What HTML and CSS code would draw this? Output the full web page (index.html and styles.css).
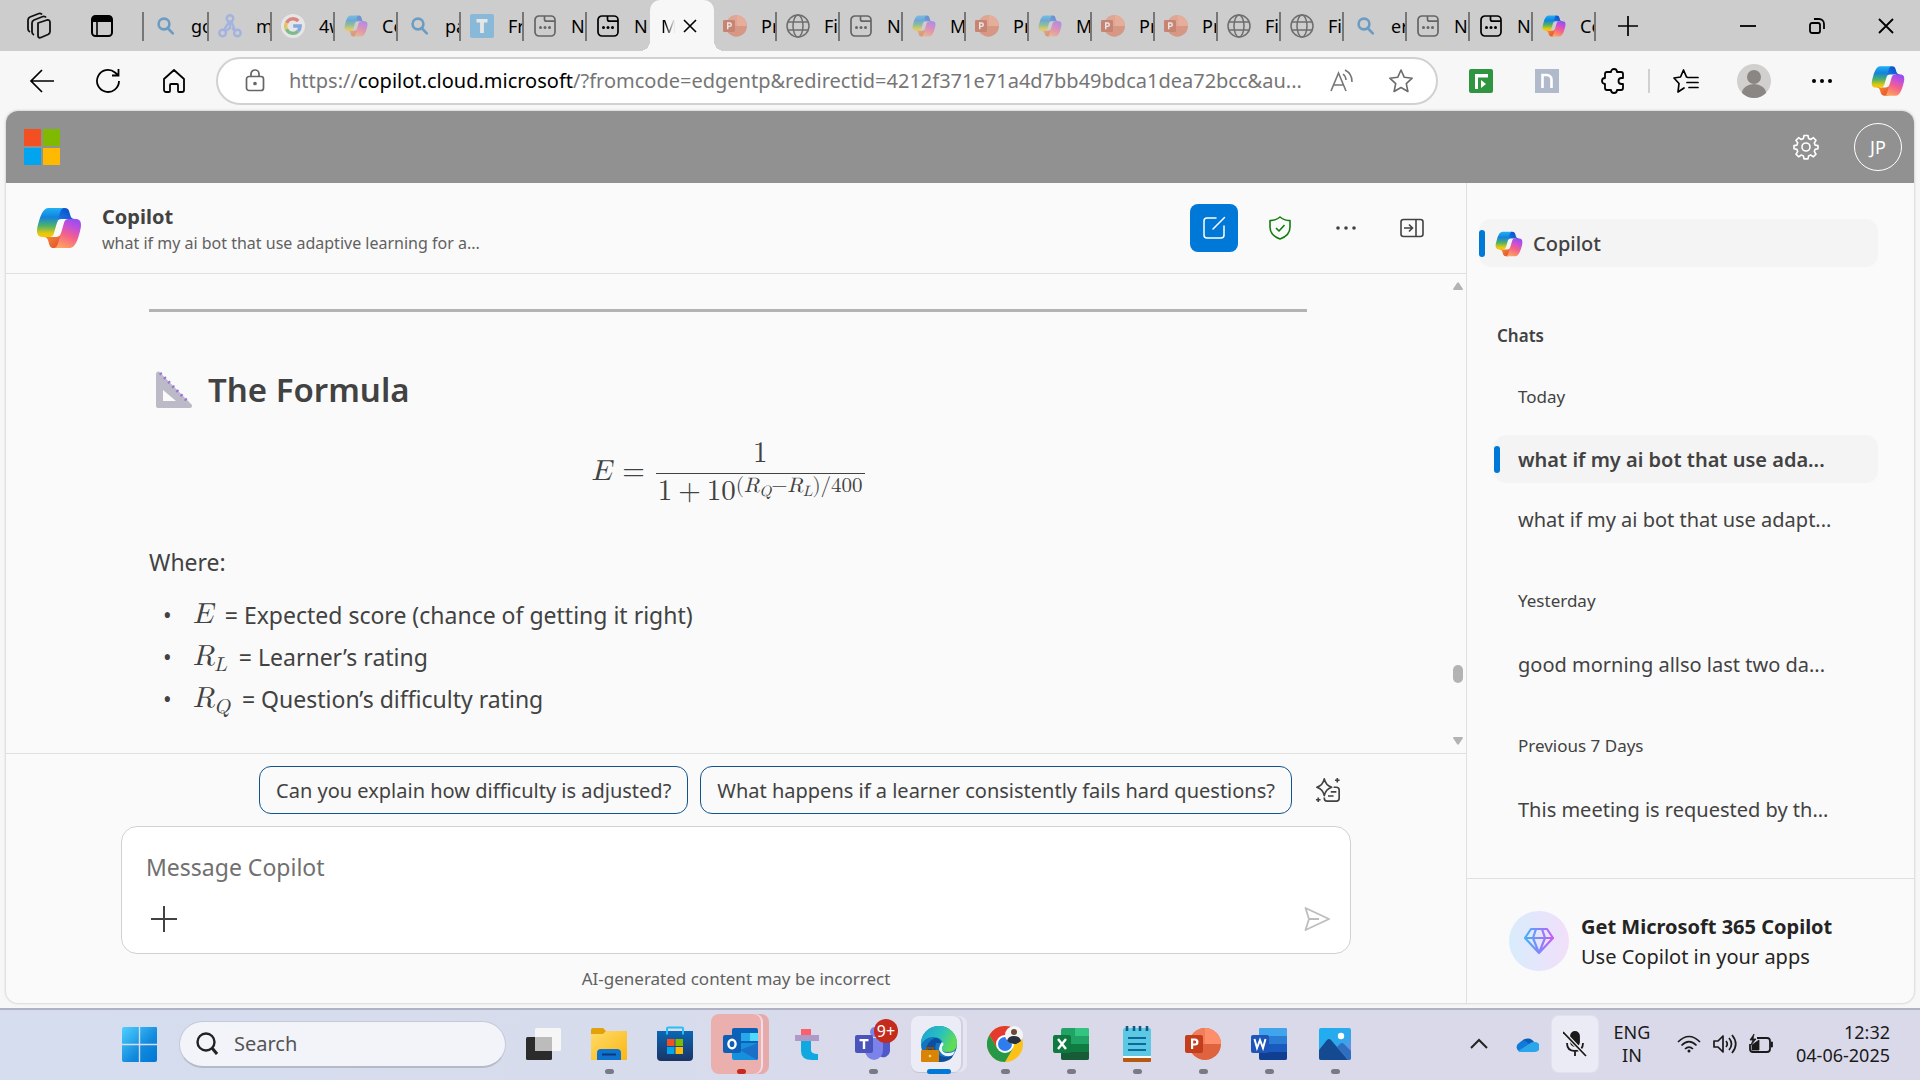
FILE: index.html
```html
<!DOCTYPE html>
<html lang="en">
<head>
<meta charset="utf-8">
<meta name="viewport" content="width=device-width, initial-scale=1">
<title>Copilot</title>
<link rel="stylesheet" href="styles.css">
</head>
<body>
<svg class="sprite" width="0" height="0" aria-hidden="true">
  <defs>
    <linearGradient id="cp-a" x1="0" y1="0" x2="0" y2="1"><stop offset="0" stop-color="#1fb0f5"/><stop offset=".32" stop-color="#1382dd"/><stop offset=".62" stop-color="#4eb269"/><stop offset=".88" stop-color="#e6c90c"/><stop offset="1" stop-color="#f8c40a"/></linearGradient>
    <linearGradient id="cp-b" x1=".7" y1="0" x2=".3" y2="1"><stop offset="0" stop-color="#9a4df0"/><stop offset=".25" stop-color="#c450d8"/><stop offset=".55" stop-color="#f4608c"/><stop offset="1" stop-color="#ffa45c"/></linearGradient>
    <linearGradient id="cp-c" x1="0" y1="1" x2="1" y2="0"><stop offset="0" stop-color="#1a86ec"/><stop offset="1" stop-color="#0a3fc4"/></linearGradient>
    <linearGradient id="cp-d" x1="0" y1="0" x2="1" y2="1"><stop offset="0" stop-color="#f9a02e"/><stop offset="1" stop-color="#e04a35"/></linearGradient>
    <linearGradient id="win-g" x1="0" y1="0" x2="1" y2="1"><stop offset="0" stop-color="#4fd0ff"/><stop offset=".6" stop-color="#1189dd"/><stop offset="1" stop-color="#0078d4"/></linearGradient>
    <linearGradient id="gem-g" x1="0" y1="0" x2="1" y2="0"><stop offset="0" stop-color="#3fb2fb"/><stop offset="1" stop-color="#c65cf8"/></linearGradient>
    <linearGradient id="edge-g" x1="0" y1="0" x2="1" y2=".4"><stop offset="0" stop-color="#1aa0dc"/><stop offset=".6" stop-color="#2bc3b8"/><stop offset="1" stop-color="#61dc55"/></linearGradient>
    <linearGradient id="folder-g" x1="0" y1="0" x2="1" y2="1"><stop offset="0" stop-color="#ffdc6a"/><stop offset="1" stop-color="#fbb613"/></linearGradient>
    <linearGradient id="store-g" x1="0" y1="0" x2="0" y2="1"><stop offset="0" stop-color="#0a66b5"/><stop offset="1" stop-color="#1b3464"/></linearGradient>
    <linearGradient id="photo-g" x1="0" y1="0" x2="1" y2="1"><stop offset="0" stop-color="#1ab0f2"/><stop offset=".6" stop-color="#33a6ec"/><stop offset="1" stop-color="#a27be0"/></linearGradient>
  </defs>
  <symbol id="copilot" viewBox="1 3 46 42">
    <path fill="url(#cp-c)" d="M34.142 7.325A4.63 4.63 0 0 0 29.7 4H28.35a4.63 4.63 0 0 0-4.554 3.794L21.48 20.407l.575-1.965a4.63 4.63 0 0 1 4.444-3.33h7.853l3.294 1.282 3.175-1.283h-.926a4.63 4.63 0 0 1-4.443-3.325z"/>
    <path fill="url(#cp-d)" d="M14.33 40.656A4.63 4.63 0 0 0 18.779 44h2.87a4.63 4.63 0 0 0 4.629-4.51l.312-12.163-.654 2.233a4.63 4.63 0 0 1-4.443 3.329h-7.919l-2.823-1.532-3.057 1.532h.912a4.63 4.63 0 0 1 4.447 3.344z"/>
    <path fill="url(#cp-a)" d="M29.5 4H13.46c-4.583 0-7.332 6.057-9.165 12.113C2.123 23.29-.72 32.885 7.503 32.885h6.925a4.63 4.63 0 0 0 4.456-3.358 2077 2077 0 0 1 4.971-17.156c.843-2.843 1.544-5.284 2.621-6.805C27.08 4.714 28.086 4 29.5 4z"/>
    <path fill="url(#cp-b)" d="M18.498 44h16.04c4.582 0 7.332-6.058 9.165-12.115 2.171-7.177 5.013-16.775-3.208-16.775h-6.926a4.63 4.63 0 0 0-4.455 3.358 2084 2084 0 0 1-4.972 17.16c-.842 2.844-1.544 5.285-2.621 6.806-.604.852-1.61 1.566-3.023 1.566z"/>
  </symbol>
  <symbol id="find" viewBox="0 0 24 24"><g fill="none" stroke="#0a6cbd" stroke-width="2.6"><circle cx="11" cy="10" r="5.4"/><path d="M14.6 14l5.2 5.4" stroke-linecap="round"/></g></symbol>
  <symbol id="nodes" viewBox="0 0 24 24"><g fill="none" stroke="#7b9bf0" stroke-width="2.4"><circle cx="12" cy="4.5" r="3.3"/><circle cx="4.6" cy="19" r="3.3"/><circle cx="19.4" cy="19" r="3.3"/><path d="M11 8l-5 8M12 8v6l-5 3.600M14 14l3.500 3M13.500 8l3 7"/></g></symbol>
  <symbol id="google" viewBox="0 0 24 24"><circle cx="12" cy="12" r="12" fill="#fff"/><g fill="none" stroke-width="3.4"><path stroke="#ea4335" d="M5.500 9a7.200 7.200 0 0 1 11.800-2"/><path stroke="#fbbc05" d="M5.500 15.500a7.200 7.200 0 0 1 0-6.800"/><path stroke="#34a853" d="M17 17.300A7.200 7.200 0 0 1 5.500 15.200"/><path stroke="#4285f4" d="M12.200 12h7a7.200 7.200 0 0 1-2.300 5.300"/></g></symbol>
  <symbol id="tee" viewBox="0 0 24 24"><rect width="24" height="24" rx="2" fill="#46a6e6"/><path d="M6.500 5h11v3.600h-3.600V19h-3.800V8.600H6.500z" fill="#fff"/></symbol>
  <symbol id="page" viewBox="0 0 24 24"><g fill="none" stroke="currentColor" stroke-width="1.700"><rect x="2" y="2" width="20" height="20" rx="4"/><path d="M11.500 2v3.200a2 2 0 0 0 2 2H22"/></g><g fill="currentColor"><circle cx="7.500" cy="13.500" r="1.500"/><circle cx="12" cy="13.500" r="1.500"/><circle cx="16.500" cy="13.500" r="1.500"/></g></symbol>
  <symbol id="globe" viewBox="0 0 24 24"><g fill="none" stroke="#111" stroke-width="1.500"><circle cx="12" cy="12" r="11"/><ellipse cx="12" cy="12" rx="5" ry="11"/><path d="M2 8h20M2 16h20"/></g></symbol>
  <symbol id="ppt" viewBox="0 0 36 36"><circle cx="20" cy="18" r="16" fill="#e0633f"/><path d="M20 2a16 16 0 0 1 16 16H20z" fill="#ff8f6b"/><path d="M20 2A16 16 0 0 0 4 18h16z" fill="#f0805c"/><rect y="9" width="18" height="18" rx="2" fill="#c43e1c"/><path d="M6 23V12.500h4a3.500 3.500 0 0 1 0 7H8.200V23zM8.200 14.500v3h1.500a1.500 1.500 0 0 0 0-3z" fill="#fff"/></symbol>
</svg>

<header class="browser">
  <div class="tabstrip">
    <div class="strip-tools">
      <button class="plain" aria-label="Workspaces"><svg width="28" height="28" viewBox="0 0 28 28" fill="none" stroke="#111" stroke-width="1.800" stroke-linejoin="round"><path d="M13 11l9-3q3-.5 3 2.500v9q0 2-2 3l-7 3q-3 1-3-2V13q0-1 0-2z"/><path d="M9 23q-2-1-2-3V11q0-2 2-3l9-3.500q2-.5 3 1M5 20q-2-1-2-3V8q0-2 2-3l9-3.500q2-.5 3 1"/></svg></button>
      <button class="plain" aria-label="Tab actions"><svg width="24" height="24" viewBox="0 0 24 24"><rect x="2" y="2" width="20" height="20" rx="3.500" fill="none" stroke="#000" stroke-width="2"/><path d="M2 3h20v5H2z"/><path d="M7 8v13" stroke="#000" stroke-width="1.600"/></svg></button>
    </div>
    <nav class="tabs" aria-label="Tabs">
      <button class="tab"><svg class="dim"><use href="#find"/></svg><span>go</span></button>
      <button class="tab"><svg class="dim"><use href="#nodes"/></svg><span>m</span></button>
      <button class="tab"><svg class="dim"><use href="#google"/></svg><span>4w</span></button>
      <button class="tab"><svg class="dim"><use href="#copilot"/></svg><span>Co</span></button>
      <button class="tab"><svg class="dim"><use href="#find"/></svg><span>pa</span></button>
      <button class="tab"><svg class="dim"><use href="#tee"/></svg><span>Fr</span></button>
      <button class="tab"><svg class="dim"><use href="#page"/></svg><span>N</span></button>
      <button class="tab last"><svg><use href="#page"/></svg><span>N</span></button>
      <button class="tab active"><span>M</span><svg viewBox="0 0 14 14" stroke="#000" stroke-width="1.600"><path d="M1 1l12 12M13 1L1 13"/></svg></button>
      <button class="tab"><svg class="dim"><use href="#ppt"/></svg><span>Pr</span></button>
      <button class="tab"><svg class="dim"><use href="#globe"/></svg><span>Fi</span></button>
      <button class="tab"><svg class="dim"><use href="#page"/></svg><span>N</span></button>
      <button class="tab"><svg class="dim"><use href="#copilot"/></svg><span>M</span></button>
      <button class="tab"><svg class="dim"><use href="#ppt"/></svg><span>Pr</span></button>
      <button class="tab"><svg class="dim"><use href="#copilot"/></svg><span>M</span></button>
      <button class="tab"><svg class="dim"><use href="#ppt"/></svg><span>Pr</span></button>
      <button class="tab"><svg class="dim"><use href="#ppt"/></svg><span>Pr</span></button>
      <button class="tab"><svg class="dim"><use href="#globe"/></svg><span>Fi</span></button>
      <button class="tab"><svg class="dim"><use href="#globe"/></svg><span>Fi</span></button>
      <button class="tab"><svg class="dim"><use href="#find"/></svg><span>er</span></button>
      <button class="tab"><svg class="dim"><use href="#page"/></svg><span>N</span></button>
      <button class="tab"><svg><use href="#page"/></svg><span>N</span></button>
      <button class="tab"><svg><use href="#copilot"/></svg><span>Co</span></button>
    </nav>
    <button class="plain newtab" aria-label="New tab"><svg width="22" height="22" viewBox="0 0 22 22" stroke="#000" stroke-width="1.700"><path d="M11 1v20M1 11h20"/></svg></button>
    <div class="window-buttons">
      <button class="plain" aria-label="Minimize"><svg width="16" height="16" viewBox="0 0 16 16" stroke="#000" stroke-width="1.800"><path d="M0 8h16"/></svg></button>
      <button class="plain" aria-label="Restore"><svg width="16" height="16" viewBox="0 0 16 16" fill="none" stroke="#000" stroke-width="1.800"><rect x="1" y="5" width="10" height="10" rx="2"/><path d="M5 1h5a5 5 0 0 1 5 5v5"/></svg></button>
      <button class="plain" aria-label="Close"><svg width="16" height="16" viewBox="0 0 16 16" stroke="#000" stroke-width="1.800"><path d="M1 1l14 14M15 1L1 15"/></svg></button>
    </div>
  </div>

  <div class="toolbar">
    <div class="nav-buttons">
      <button class="plain" aria-label="Back"><svg width="26" height="24" viewBox="0 0 26 24" fill="none" stroke="#000" stroke-width="1.700"><path d="M25 12H2M13 1L2 12l11 11"/></svg></button>
      <button class="plain" aria-label="Refresh"><svg width="26" height="26" viewBox="0 0 26 26" fill="none" stroke="#000" stroke-width="1.800"><path d="M24 13a11 11 0 1 1-4-8.500l3 2.500M23.500 1v6.500H17"/></svg></button>
      <button class="plain" aria-label="Home"><svg width="24" height="26" viewBox="0 0 24 26" fill="none" stroke="#000" stroke-width="1.800" stroke-linejoin="round"><path d="M2 11L12 2l10 9v11a2 2 0 0 1-2 2h-3a1 1 0 0 1-1-1v-6a1 1 0 0 0-1-1H9a1 1 0 0 0-1 1v6a1 1 0 0 1-1 1H4a2 2 0 0 1-2-2z"/></svg></button>
    </div>
    <div class="address">
      <button class="plain" aria-label="Site information"><svg width="20" height="24" viewBox="0 0 20 24" fill="none" stroke="#666" stroke-width="1.700"><rect x="1.500" y="7.500" width="17" height="14" rx="2.500"/><path d="M6 7V5a4 4 0 0 1 8 0v2"/><circle cx="10" cy="14.500" r="1" fill="#666"/></svg></button>
      <div class="url" role="textbox" aria-label="Address" contenteditable="true" spellcheck="false">https://<b>copilot.cloud.microsoft</b>/?fromcode=edgentp&amp;redirectid=4212f371e71a4d7bb49bdca1dea72bcc&amp;au...</div>
      <button class="plain" aria-label="Read aloud"><svg width="24" height="24" viewBox="0 0 24 24" fill="none" stroke="#767676" stroke-width="1.600"><path d="M1 22L8.500 4 16 22M4 16h9.500M13 5a8 8 0 0 1 3 6M15 1a13 13 0 0 1 7 12"/></svg></button>
      <button class="plain" aria-label="Add to favorites"><svg width="26" height="26" viewBox="0 0 26 26" fill="none" stroke="#6b6b6b" stroke-width="1.600" stroke-linejoin="round"><path d="M13 2l3.300 7.300 7.900.9-5.900 5.400 1.600 7.900-6.900-4-6.900 4 1.600-7.900-5.900-5.400 7.900-.9z"/></svg></button>
    </div>
    <div class="extensions">
      <button class="plain" aria-label="Recorder"><svg width="24" height="24" viewBox="0 0 24 24"><rect width="24" height="24" rx="2" fill="#2f9540"/><path d="M6 20V5h13v3.500H9V20z" fill="#fff"/><path d="M12 11l5 4-5 4z" fill="#fff"/></svg></button>
      <button class="plain" aria-label="Notes"><svg width="24" height="24" viewBox="0 0 24 24"><rect width="24" height="24" fill="#b1bacb"/><path d="M7.500 19V6h4.500a4.500 4.500 0 0 1 4.500 4.500V19" fill="none" stroke="#fff" stroke-width="2.600"/></svg></button>
      <button class="plain" aria-label="Extensions"><svg width="26" height="26" viewBox="0 0 26 26" fill="none" stroke="#000" stroke-width="1.800" stroke-linejoin="round"><path d="M7 4h4a3 3 0 0 1 6 0h4q2 0 2 2v4h-1.500a3 3 0 0 0 0 6H23v4q0 2-2 2h-4a3 3 0 0 1-6 0H7q-2 0-2-2v-4a3 3 0 0 1 0-6V6q0-2 2-2z"/></svg></button>
      <span class="rule"></span>
      <button class="plain" aria-label="Favorites"><svg width="26" height="26" viewBox="0 0 26 26" fill="none" stroke="#000" stroke-width="1.700" stroke-linejoin="round" stroke-linecap="round"><path d="M15 9.500L13.500 9l-3-7-3 7-6.500 1 5 5.500L5 24l6-4M16 9.500h9M14 14.500h11M16 19.500h9"/></svg></button>
      <button class="plain" aria-label="Profile"><svg width="34" height="34" viewBox="0 0 34 34"><circle cx="17" cy="17" r="17" fill="#d2d0ce"/><circle cx="17" cy="13" r="7" fill="#8a8684"/><path d="M5 29a12 9 0 0 1 24 0 17 17 0 0 1-24 0z" fill="#8a8684"/></svg></button>
      <button class="plain" aria-label="Settings and more"><svg width="22" height="6" viewBox="0 0 22 6"><circle cx="3" cy="3" r="2"/><circle cx="11" cy="3" r="2"/><circle cx="19" cy="3" r="2"/></svg></button>
      <button class="plain" aria-label="Copilot"><svg width="34" height="32"><use href="#copilot"/></svg></button>
    </div>
  </div>
</header>

<div class="frame">
  <div class="suite-bar">
    <svg width="36" height="36" viewBox="0 0 36 36" role="img" aria-label="Microsoft"><path fill="#f25022" d="M0 0h17v17H0z"/><path fill="#7fba00" d="M19 0h17v17H19z"/><path fill="#00a4ef" d="M0 19h17v17H0z"/><path fill="#ffb900" d="M19 19h17v17H19z"/></svg>
    <div class="suite-actions">
      <button class="plain" aria-label="Settings"><svg width="26" height="26" viewBox="0 0 26 26" fill="none" stroke="#fff" stroke-width="1.600" stroke-linejoin="round"><path d="M11 1.500h4l.6 3.100 2.100.9 2.700-1.800 2.600 2.700-1.700 2.600.8 2.100 2.900.5v3.200l-2.900.6-.8 2.100 1.700 2.600-2.600 2.700-2.700-1.800-2.100.9-.6 3h-4l-.6-3-2.100-.9-2.700 1.800L3 20.100l1.700-2.600-.8-2.100-2.900-.6v-3.200l2.900-.5.8-2.100L3 6.400l2.600-2.700 2.700 1.800 2.100-.9z"/><circle cx="13" cy="13" r="4"/></svg></button>
      <button class="avatar" aria-label="Account">JP</button>
    </div>
  </div>

  <div class="app">
    <main class="chat">
      <div class="chat-head">
        <svg width="46" height="42"><use href="#copilot"/></svg>
        <div class="chat-title">
          <h1>Copilot</h1>
          <p>what if my ai bot that use adaptive learning for a...</p>
        </div>
        <div class="chat-actions">
          <button class="compose" aria-label="New chat"><svg width="24" height="24" viewBox="0 0 24 24" fill="none" stroke="#fff" stroke-width="1.500" stroke-linecap="round"><path d="M14 2H5a3 3 0 0 0-3 3v14a3 3 0 0 0 3 3h14a3 3 0 0 0 3-3v-9M22.500 1.500L11 13"/></svg></button>
          <button class="square" aria-label="Protected"><svg width="24" height="24" viewBox="0 0 24 24" fill="none" stroke="#107c10" stroke-width="1.600" stroke-linejoin="round"><path d="M12 1q4 3.400 10 3.600V11q0 8.500-10 12Q2 19.500 2 11V4.600Q8 4.400 12 1zM8 12l3 3 5.500-6"/></svg></button>
          <button class="square" aria-label="More"><svg width="20" height="4" viewBox="0 0 20 4" fill="#424242"><circle cx="2" cy="2" r="1.800"/><circle cx="10" cy="2" r="1.800"/><circle cx="18" cy="2" r="1.800"/></svg></button>
          <button class="square" aria-label="Hide panel"><svg width="24" height="20" viewBox="0 0 24 20" fill="none" stroke="#424242" stroke-width="1.600"><rect x="1" y="1.500" width="22" height="17" rx="2.500"/><path d="M16 1.500v17M4 10h8M9 6.500l3.500 3.500L9 13.500"/></svg></button>
        </div>
      </div>

      <div class="scroll-area">
        <article class="answer">
          <hr>
          <h2><svg width="36" height="38" viewBox="0 0 36 38"><path fill="#bcbac6" fill-rule="evenodd" d="M0 3q0-3 3-2.500L36 34v1q0 2-2 2H2q-2 0-2-2zM7 19v11h13z"/><path d="M4 2l29 30" stroke="#9a72e0" stroke-width="3" stroke-dasharray="2 4"/></svg>The Formula</h2>
          <div class="formula math" role="math">
            <i>E</i><span class="eq">=</span>
            <span class="frac"><span class="num">1</span><span class="den">1<span class="plus">+</span>10<sup>(<i>R<sub>Q</sub></i>−<i>R<sub>L</sub></i>)/400</sup></span></span>
          </div>
          <p>Where:</p>
          <ul>
            <li><span class="math"><i>E</i></span> = Expected score (chance of getting it right)</li>
            <li><span class="math"><i>R<sub>L</sub></i></span> = Learner’s rating</li>
            <li><span class="math"><i>R<sub>Q</sub></i></span> = Question’s difficulty rating</li>
          </ul>
        </article>
        <div class="scrollbar" aria-hidden="true">
          <svg width="10" height="8" viewBox="0 0 10 8"><path d="M4 1q1-1.500 2 0l4 6q0 1-1 1H1Q0 8 0 7z" fill="#b3b3b3"/></svg>
          <span class="above"></span><span class="thumb"></span><span class="below"></span>
          <svg width="10" height="8" viewBox="0 0 10 8"><path d="M4 7q1 1.500 2 0l4-6q0-1-1-1H1Q0 0 0 1z" fill="#b3b3b3"/></svg>
        </div>
      </div>

      <div class="composer">
        <div class="chips">
          <button class="chip">Can you explain how difficulty is adjusted?</button>
          <button class="chip">What happens if a learner consistently fails hard questions?</button>
          <button class="plain prompts" aria-label="View prompts"><svg width="26" height="26" viewBox="0 0 28 28" fill="none" stroke="#424242" stroke-width="1.800" stroke-linejoin="round"><path d="M10 2q1.500 7 8 9-6.500 2-8 9-1.500-7-8-9 6.500-2 8-9zM20 11h3a3 3 0 0 1 3 3v9a3 3 0 0 1-3 3H13a3 3 0 0 1-3-3v-1M17 16h6M14 20.500h6M24 1v5M21.500 3.500h5M3.500 22v5M1 24.500h5"/></svg></button>
        </div>
        <div class="message-box">
          <textarea rows="1" placeholder="Message Copilot" aria-label="Message Copilot"></textarea>
          <div class="message-actions">
            <button class="plain" aria-label="Add content"><svg width="28" height="28" viewBox="0 0 28 28" stroke="#424242" stroke-width="2"><path d="M14 1v26M1 14h26"/></svg></button>
            <button class="plain" aria-label="Send"><svg width="26" height="24" viewBox="0 0 26 24" fill="none" stroke="#bdbdbd" stroke-width="1.800" stroke-linejoin="round"><path d="M1.500 1L25 12 1.500 23 5 12zM5 12h10"/></svg></button>
          </div>
        </div>
        <p class="note">AI-generated content may be incorrect</p>
      </div>
    </main>

    <aside class="side">
      <div class="side-list">
        <a class="agent" href="#"><svg width="28" height="26"><use href="#copilot"/></svg>Copilot</a>
        <h3>Chats</h3>
        <section>
          <h4>Today</h4>
          <a class="item current" href="#">what if my ai bot that use ada...</a>
          <a class="item" href="#">what if my ai bot that use adapt...</a>
        </section>
        <section>
          <h4>Yesterday</h4>
          <a class="item" href="#">good morning allso last two da...</a>
        </section>
        <section>
          <h4>Previous 7 Days</h4>
          <a class="item" href="#">This meeting is requested by th...</a>
        </section>
      </div>
      <a class="upsell" href="#">
        <span class="gem"><svg width="30" height="28" viewBox="0 0 30 28" fill="none" stroke="url(#gem-g)" stroke-width="2.200" stroke-linejoin="round"><path d="M7 2h16l6 9-14 15L1 11zM1 11h28M12 2l-3 9 6 15M18 2l3 9-6 15"/></svg></span>
        <span class="upsell-text"><b>Get Microsoft 365 Copilot</b>Use Copilot in your apps</span>
      </a>
    </aside>
  </div>
</div>

<footer class="taskbar">
  <button class="start" aria-label="Start"><svg width="35" height="35" viewBox="0 0 35 35" fill="url(#win-g)"><path d="M2 0h32a1 1 0 0 1 1 1v32a2 2 0 0 1-2 2H2a2 2 0 0 1-2-2V2a2 2 0 0 1 2-2z"/><path d="M17.500 0v35M0 17.500h35" stroke="#d7ddec" stroke-width="1.400"/></svg></button>
  <label class="search"><svg width="22" height="23" viewBox="0 0 22 23" fill="none" stroke="#222" stroke-width="2.400"><circle cx="10" cy="10" r="8.500"/><path d="M16 16l5 6" stroke-width="3"/></svg><input type="text" placeholder="Search" aria-label="Search"></label>
  <div class="apps">
    <button aria-label="Task view"><svg viewBox="0 0 36 36"><rect x="1" y="11" width="26" height="23" rx="1.500" fill="#2b2b2b"/><rect x="10" y="2" width="26" height="23" rx="1.500" fill="#f6f6f6"/><path d="M10 11h17v14H10z" fill="#bcbcbc"/></svg></button>
    <button class="running" aria-label="File Explorer"><svg viewBox="0 0 36 36"><path d="M0 4q0-2 2-2h10l3 3h19q2 0 2 2v25q0 2-2 2H2q-2 0-2-2z" fill="#e2a20a"/><path d="M0 8h12l3-3h19q2 0 2 2v25q0 2-2 2H2q-2 0-2-2z" fill="url(#folder-g)"/><path d="M6 34V27q0-4 4-4h16q4 0 4 4v7z" fill="#0f72cc"/><path d="M11 28.500h14" stroke="#063a7a" stroke-width="2"/></svg></button>
    <button aria-label="Microsoft Store"><svg viewBox="0 0 36 36"><path d="M10 8V2.500q0-1 1-1h14q1 0 1 1V8" fill="none" stroke="#2dbcf5" stroke-width="2"/><path d="M0 5h36v26q0 4-4 4H4q-4 0-4-4z" fill="url(#store-g)"/><path fill="#f25022" d="M10 13h7.500v7H10z"/><path fill="#7fba00" d="M18.500 13H26v7h-7.500z"/><path fill="#00a4ef" d="M10 21h7.500v7H10z"/><path fill="#ffb900" d="M18.500 21H26v7h-7.500z"/><path d="M10 5v3.500M26 5v3.500" stroke="#2dbcf5" stroke-width="2"/></svg></button>
    <button class="running alert" aria-label="Outlook"><svg viewBox="0 0 36 36"><rect x="9" y="2" width="26" height="20" rx="2" fill="#0a62b8"/><path d="M18 7h9v8h-9z" fill="#28a8ea"/><path d="M27 7h8v8h-8z" fill="#50d9ff"/><path d="M9 17h26v15q0 2-2 2H11q-2 0-2-2z" fill="#1490df"/><path d="M35 17v15q0 1-1 2L17 24z" fill="#1a70c8"/><rect y="9" width="18" height="18" rx="2" fill="#0f5fb5"/><ellipse cx="9" cy="18" rx="3.600" ry="4.300" fill="none" stroke="#fff" stroke-width="2.400"/></svg></button>
    <button aria-label="T app"><svg viewBox="0 0 36 36"><path d="M12 3h10v8H12z" fill="#fb5f6c"/><path d="M12 14h10v10q0 4 7 4v6h-6q-11 0-11-9z" fill="#10a8e0"/><path d="M6 9h24v6H6z" fill="#ae9ac6"/></svg></button>
    <button class="running" aria-label="Teams"><svg viewBox="0 0 36 36"><circle cx="20" cy="6" r="5" fill="#7b83eb"/><circle cx="30" cy="8" r="4" fill="#5059c9"/><path d="M24 13h11v12a7 7 0 0 1-11 5z" fill="#5059c9"/><path d="M10 12h18v12a9 10 0 0 1-18 0z" fill="#7b83eb"/><rect y="9" width="18" height="18" rx="2" fill="#4b53bc"/><path d="M4.500 13h9v2.200h-3.300V23H7.800v-7.800H4.500z" fill="#fff"/></svg><span class="count">9+</span></button>
    <button class="running focused" aria-label="Edge"><svg viewBox="0 0 36 36"><circle cx="18" cy="18" r="18" fill="#1175bf"/><path d="M0 17A18 17 0 0 1 36 17q0 9-9 9-8 0-6-5 1-2 1-4-2-6-10-6-8 0-12 8z" fill="url(#edge-g)"/><path d="M15 17q-3 9 5 13 6 3 13-2-3 8-14 8Q5 36 5 25q0-9 9-13 5 0 6 5z" fill="#0d4f9e"/><path d="M21 16q3 2 0 5-1 6 6 6 4 0 7-2l-2 4q-6 3-11-1-6-5 0-12z" fill="#eef2fb"/><rect y="24" width="18" height="12" rx="1" fill="#d98307"/><path d="M6 24v-2h6v2" fill="none" stroke="#8a4d06" stroke-width="2"/><circle cx="9" cy="30" r="1.300" fill="#ffe066"/></svg></button>
    <button class="running" aria-label="Chrome"><svg viewBox="0 0 36 36"><circle cx="18" cy="18" r="18" fill="#fbc116"/><path d="M2.400 9A18 18 0 0 1 33.600 9H18l-7.800 13.500z" fill="#e33b2e"/><path d="M2.400 9A18 18 0 0 0 18 36l7.800-13.500-15.600 0z" fill="#279847"/><circle cx="18" cy="18" r="9" fill="#fff"/><circle cx="18" cy="18" r="7" fill="#2d7df0"/><circle cx="27" cy="9" r="9" fill="#f4f4f4"/><circle cx="27" cy="6" r="3" fill="#6a4a3a"/><path d="M20 15q1-5 7-5t7 5q-3 3-7 3t-7-3z" fill="#27303f"/></svg></button>
    <button class="running" aria-label="Excel"><svg viewBox="0 0 36 36"><rect x="8" y="2" width="28" height="32" rx="2" fill="#21a366"/><path d="M22 2h12q2 0 2 2v6H22z" fill="#33c481"/><path d="M8 18h14v8H8z" fill="#107c41"/><path d="M22 18h14v8H22z" fill="#107c41"/><path d="M8 26h28v6q0 2-2 2H10q-2 0-2-2z" fill="#185c37"/><rect y="9" width="18" height="18" rx="2" fill="#0f7a3f"/><path d="M5 13l8 10M13 13L5 23" stroke="#fff" stroke-width="2.400"/></svg></button>
    <button class="running" aria-label="Notepad"><svg viewBox="0 0 36 36"><rect x="4" y="30" width="28" height="6" rx="1" fill="#b55a10"/><rect x="4" y="2" width="28" height="29" rx="2" fill="#5cc8e4"/><path d="M4 31h28" stroke="#fff" stroke-width="2"/><path d="M9 12h18M9 18h18M9 24h18" stroke="#0b6a9c" stroke-width="2"/><path d="M8 0v5M15 0v5M21 0v5M28 0v5" stroke="#0b5c80" stroke-width="2.600"/></svg></button>
    <button class="running" aria-label="PowerPoint"><svg viewBox="0 0 36 36"><use href="#ppt"/></svg></button>
    <button class="running" aria-label="Word"><svg viewBox="0 0 36 36"><rect x="8" y="2" width="28" height="32" rx="2" fill="#2b7cd3"/><path d="M8 10V4q0-2 2-2h24q2 0 2 2v6z" fill="#41a5ee"/><path d="M8 18h28v8H8z" fill="#185abd"/><path d="M8 26h28v6q0 2-2 2H10q-2 0-2-2z" fill="#103f91"/><rect y="9" width="18" height="18" rx="2" fill="#1d55b8"/><path d="M3.500 13l2.500 9 3-8 3 8 2.500-9" fill="none" stroke="#fff" stroke-width="2"/></svg></button>
    <button class="running" aria-label="Photos"><svg viewBox="0 0 36 36"><rect x="2" y="2" width="32" height="32" rx="2" fill="url(#photo-g)"/><path d="M2 24l8-10q2-2 4 0l17 20H4q-2 0-2-2z" fill="#144a92"/><path d="M20 21l3-3q2-2 4 0l7 7v7q0 2-2 2h-1z" fill="#2f6fc0"/><circle cx="24" cy="10" r="3.200" fill="#fff"/></svg></button>
  </div>
  <div class="tray">
    <button class="plain" aria-label="Show hidden icons"><svg width="18" height="12" viewBox="0 0 18 12" fill="none" stroke="#222" stroke-width="2"><path d="M1 10l8-8 8 8"/></svg></button>
    <button class="plain" aria-label="OneDrive"><svg width="24" height="16" viewBox="0 0 24 16"><path d="M7 5a7 6 0 0 1 12 1l-5 6z" fill="#0a5cb8"/><path d="M5 16a5 5 0 0 1-1-9q4-5 9 0l5 3-6 6z" fill="#0f7ad8"/><path d="M3 15l11-7a6 5 0 0 1 6-2 5 5 0 0 1 0 10H5z" fill="#2ba6ea"/></svg></button>
    <button class="plain mic" aria-label="Microphone"><svg width="24" height="26" viewBox="0 0 24 26" fill="none" stroke="#1a1a1a" stroke-width="1.800"><rect x="8" y="1" width="8" height="14" rx="4" fill="#1a1a1a"/><path d="M4 12q0 8 8 8t8-8M12 20v5"/><path d="M1 2l22 23" stroke="#f0f0f6" stroke-width="4"/><path d="M0 1l23 24"/></svg></button>
    <button class="plain lang">ENG<br>IN</button>
    <button class="plain quick" aria-label="Network, volume, battery">
      <svg width="24" height="18" viewBox="0 0 24 18" fill="none" stroke="#1a1a1a" stroke-width="1.700"><path d="M1 7q11-11 22 0M4.500 10.500q7.500-7.500 15 0M8 14q4-4 8 0"/><circle cx="12" cy="16" r="1.500" fill="#1a1a1a" stroke="none"/></svg>
      <svg width="24" height="20" viewBox="0 0 24 20" fill="none" stroke="#1a1a1a" stroke-width="1.700" stroke-linejoin="round"><path d="M1 7h4l5-5v16l-5-5H1zM13 7q2.500 3 0 6M16 4q5 6 0 12M19 1q7.500 9 0 18"/></svg>
      <svg width="24" height="20" viewBox="0 0 24 20" fill="none" stroke="#1a1a1a" stroke-width="1.800"><path d="M8 4h10q3 0 3 3v8q0 3-3 3H4q-3 0-3-3v-5"/><path d="M3 16v-5l7-5v10zM22 8h1.500v5H22zM5 0L1 6h3L2 11l5-6H4z" fill="#1a1a1a" stroke-width=".8"/></svg>
    </button>
    <button class="plain clock">12:32<br>04-06-2025</button>
  </div>
</footer>
</body>
</html>
```
FILE: styles.css
```css
* { box-sizing: border-box; }

body {
  margin: 0;
  min-height: 100vh;
  display: flex;
  flex-direction: column;
  background: #f7f7f7;
  color: #424242;
  font: 20px/28px "Segoe UI", "Noto Sans", sans-serif;
}

h1, h2, h3, h4, p, ul { margin: 0; padding: 0; }
button { font: inherit; color: inherit; border: 0; padding: 0; background: none; }
a { color: inherit; text-decoration: none; }
svg { display: block; flex: none; }
.sprite { position: absolute; }
.plain { display: flex; align-items: center; justify-content: center; }

/* Tab strip */
.tabstrip { display: flex; height: 51px; background: #cdcdcd; color: #000; }
.strip-tools { display: flex; width: 142px; padding-left: 7px; }
.strip-tools button { width: 63px; }
.tabs { display: flex; }
.tab {
  display: flex;
  align-items: center;
  position: relative;
  width: 63px;
  padding-left: 9px;
  gap: 14px;
  overflow: hidden;
  font-size: 18px;
  color: #000;
}
.tab:first-child { width: 67px; padding-left: 11px; }
.tab svg { width: 24px; height: 24px; }
.tab span { white-space: nowrap; }
.tab::after, .tab:first-child::before {
  content: "";
  position: absolute;
  right: 0;
  top: 12px;
  bottom: 10px;
  width: 2px;
  background: #777;
}
.tab:first-child::before { right: auto; left: 0; }
.tab.last::after { display: none; }
.dim { opacity: .5; }
.tab.active {
  width: 64px;
  padding-left: 11px;
  gap: 8px;
  background: #f7f7f7;
  border-radius: 10px 10px 0 0;
  overflow: visible;
}
.tab.active span {
  width: 14px;
  overflow: hidden;
  -webkit-mask-image: linear-gradient(90deg, #000 30%, transparent);
  mask-image: linear-gradient(90deg, #000 30%, transparent);
}
.tab.active svg { width: 14px; height: 14px; }
.tab.active::before, .tab.active::after {
  content: "";
  position: absolute;
  top: auto;
  bottom: 0;
  width: 10px;
  height: 10px;
}
.tab.active::before { left: -10px; background: radial-gradient(circle at 0 0, transparent 10px, #f7f7f7 10px); }
.tab.active::after { right: -10px; background: radial-gradient(circle at 100% 0, transparent 10px, #f7f7f7 10px); }
.newtab { width: 64px; }
.window-buttons { display: flex; margin-left: auto; }
.window-buttons button { width: 69px; }

/* Toolbar */
.toolbar { display: flex; align-items: center; height: 60px; padding: 6px 0 6px 9px; }
.nav-buttons { display: flex; width: 207px; }
.nav-buttons button { width: 66px; }
.address {
  display: flex;
  align-items: center;
  flex: 1;
  min-width: 0;
  height: 48px;
  padding: 0 22px 0 27px;
  border: 2px solid #d1d1d1;
  border-radius: 24px;
  background: #fff;
}
.url {
  flex: 1;
  min-width: 0;
  margin-left: 24px;
  overflow: hidden;
  white-space: nowrap;
  color: #767676;
}
.url b { font-weight: 400; color: #000; }
.address .url ~ button { margin-left: 34px; }
.address .url + button { margin-left: 20px; }
.extensions { display: flex; align-items: center; margin-left: 10px; }
.extensions button { width: 66px; }
.rule { width: 2px; height: 24px; margin: 0 2px; background: #d0d0d0; }
.rule ~ button { width: 68px; }
.rule ~ button:last-child { width: 64px; }

/* Page frame */
.frame {
  flex: 1;
  display: flex;
  flex-direction: column;
  margin: 0 6px 5px;
  border-radius: 12px;
  overflow: hidden;
  background: #fafafa;
  box-shadow: 0 0 2px 1px #d8d8d8;
}
.suite-bar {
  display: flex;
  align-items: center;
  justify-content: space-between;
  height: 72px;
  padding: 0 12px 0 18px;
  background: #919191;
}
.suite-actions { display: flex; align-items: center; gap: 35px; }
.avatar {
  width: 48px;
  height: 48px;
  border: 1px solid #fff;
  border-radius: 50%;
  color: #fff;
  font-size: 18px;
}
.app { flex: 1; display: flex; }
.chat { flex: 1; min-width: 0; display: flex; flex-direction: column; }

.chat-head {
  display: flex;
  align-items: center;
  height: 91px;
  padding: 0 30px;
  gap: 20px;
  border-bottom: 1px solid #e0e0e0;
}
.chat-title { padding-top: 2px; }
.chat-head h1 { font-size: 20px; line-height: 28px; font-weight: 700; }
.chat-head p { font-size: 16px; line-height: 24px; color: #616161; }
.chat-actions { display: flex; gap: 18px; margin-left: auto; }
.compose, .square {
  display: flex;
  align-items: center;
  justify-content: center;
  width: 48px;
  height: 48px;
  border-radius: 8px;
}
.compose { background: #0078d8; }

.scroll-area { flex: 1; display: flex; }
.answer { flex: 1; min-width: 0; padding: 35px 143px 20px; font-size: 23px; line-height: 42px; }
.scrollbar { display: flex; flex-direction: column; align-items: center; width: 16px; padding: 8px 0; }
.above { flex: 372; }
.below { flex: 54; }
.thumb { width: 10px; height: 18px; border-radius: 5px; background: #b3b3b3; }
hr { height: 3px; margin: 0; border: 0; background: #b3b3b3; }
h2 {
  display: flex;
  align-items: center;
  gap: 16px;
  margin-top: 53px;
  padding-left: 7px;
  font-size: 33px;
  line-height: 50px;
  font-weight: 600;
}
.math { font-family: "Latin Modern Math", "Liberation Serif", serif; font-size: 29px; }
.math sub { font-size: 20px; line-height: 0; vertical-align: -6px; }
.formula { display: flex; align-items: center; justify-content: center; height: 72px; margin-top: 21px; line-height: 36px; }
.eq { margin: 0 11px; }
.plus { margin: 0 6px; }
.frac { display: flex; flex-direction: column; align-items: center; }
.num, .den { padding: 0 2px; }
.num { line-height: 38px; }
.den { border-top: 1px solid #424242; white-space: nowrap; }
.den sup { font-size: 21px; line-height: 0; vertical-align: 8px; }
.den sub { font-size: 15px; vertical-align: -4px; }
.answer p { margin-top: 36px; line-height: 36px; }
.answer ul { margin-top: 14px; list-style: none; }
.answer li { display: flex; gap: 12px; white-space: nowrap; }
.answer li::before { content: "•"; width: 18px; padding-left: 14px; }

/* Composer */
.composer { padding: 12px 115px 11px; border-top: 1px solid #e0e0e0; }
.chips { display: flex; justify-content: flex-end; align-items: center; gap: 12px; padding-right: 10px; }
.chip { height: 48px; padding: 2px 16px 0; border: 1px solid #0f548c; border-radius: 12px; white-space: nowrap; }
.prompts { margin-left: 11px; }
.message-box {
  margin-top: 12px;
  padding: 22px 20px 18px 24px;
  border: 1px solid #d1d1d1;
  border-radius: 16px;
  background: #fff;
}
textarea {
  display: block;
  width: 100%;
  height: 36px;
  padding: 0;
  border: 0;
  resize: none;
  overflow: hidden;
  background: none;
  outline: 0;
  font: 23px/36px "Segoe UI", "Noto Sans", sans-serif;
}
textarea::placeholder { color: #707070; }
.message-actions { display: flex; justify-content: space-between; align-items: center; height: 48px; margin: 2px 0 0 4px; padding-top: 16px; }
.note { margin-top: 12px; text-align: center; font-size: 17px; line-height: 26px; color: #616161; }

/* Side panel */
.side { width: 448px; display: flex; flex-direction: column; border-left: 1px solid #e0e0e0; }
.side-list { flex: 1; padding: 36px 36px 0 27px; }
.agent, .item { position: relative; display: flex; align-items: center; height: 48px; padding-top: 2px; border-radius: 12px; }
.agent { gap: 10px; margin-left: -15px; padding-left: 16px; background: #f4f4f4; font-weight: 500; }
.item { padding-left: 24px; white-space: nowrap; }
.item + .item { margin-top: 12px; }
.current { background: #f4f4f4; font-weight: 600; }
.agent::before, .current::before {
  content: "";
  position: absolute;
  left: 0;
  top: 11px;
  width: 6px;
  height: 27px;
  border-radius: 3px;
  background: #0078d8;
}
.side h3 { margin: 55px 0 0 3px; font-size: 17px; line-height: 28px; font-weight: 600; }
.side h4 { margin: 33px 0 24px 24px; font-size: 17px; line-height: 28px; font-weight: 400; }
.side section + section h4 { margin-top: 44px; margin-bottom: 25px; }
.upsell { display: flex; align-items: center; gap: 12px; height: 125px; padding-left: 42px; border-top: 1px solid #e0e0e0; color: #242424; }
.gem { display: flex; align-items: center; justify-content: center; width: 60px; height: 60px; border-radius: 50%; background: linear-gradient(90deg, #d8ecfc, #f2dffa); }
.upsell-text { padding-top: 2px; line-height: 30px; white-space: nowrap; }
.upsell-text b { display: block; }

/* Taskbar */
.taskbar {
  display: flex;
  align-items: center;
  height: 72px;
  padding: 0 30px 2px 102px;
  border-top: 2px solid #aeb2c2;
  background: linear-gradient(90deg, #d5ddee, #d7dcec 35%, #dad9ea 50%, #dad9ea);
  color: #1a1a1a;
  font-size: 18px;
}
.start { width: 77px; padding-left: 20px; }
.search {
  display: flex;
  align-items: center;
  gap: 16px;
  width: 327px;
  height: 47px;
  padding-left: 16px;
  border: 1px solid #c5cad9;
  border-bottom: 2px solid #b4bac8;
  border-radius: 24px;
  background: #f2f4fa;
}
.search input { width: 240px; border: 0; padding: 0; outline: 0; background: none; font: 20px/28px "Segoe UI", "Noto Sans", sans-serif; }
.search input::placeholder { color: #555; }
.apps { display: flex; margin-left: 4px; }
.apps button { position: relative; display: flex; align-items: center; justify-content: center; width: 66px; height: 60px; }
.apps svg { width: 36px; height: 36px; position: relative; }
.running::after {
  content: "";
  position: absolute;
  bottom: 0;
  left: 29px;
  width: 9px;
  height: 5px;
  border-radius: 3px;
  background: #7a7a85;
}
.alert::before, .focused::before {
  content: "";
  position: absolute;
  left: 3px;
  top: 0;
  width: 50px;
  height: 60px;
  border-radius: 8px;
  background: #ebb0ad;
  box-shadow: 2px 0 #f0dce4, 8px 0 #e6aaaa;
}
.alert::after { background: #c42b1c; }
.focused::before { left: 5px; top: 2px; width: 50px; height: 56px; background: #ececf6; box-shadow: 2px 0 #d0d0e0, 6px 0 #e6e6f2, 0 1px #c4c4d4; }
.focused::after { left: 21px; width: 24px; background: #0078d8; }
.count {
  position: absolute;
  right: 8px;
  top: 5px;
  width: 24px;
  height: 24px;
  border-radius: 50%;
  background: #c42b1c;
  color: #fff;
  font-size: 16px;
  line-height: 24px;
}
.tray { display: flex; align-items: center; margin-left: auto; line-height: 23px; }
.tray > button { width: 48px; height: 58px; }
.tray .mic { border-radius: 8px; background: #ebebf5; border: 1px solid #e2e2ee; }
.tray .lang { width: 66px; }
.tray .quick { width: 120px; gap: 12px; }
.tray .clock { width: 105px; text-align: right; justify-content: flex-end; white-space: nowrap; }
```
